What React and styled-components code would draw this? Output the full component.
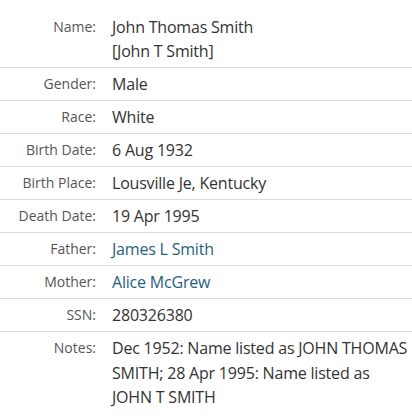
import React from "react";
import styled, { createGlobalStyle } from "styled-components";

const Global = createGlobalStyle`
  html, body { margin: 0; padding: 0; background: #fff; }
  body { font-family: "Open Sans", Lato, sans-serif; }
`;

const Table = styled.div`
  width: 412px;
  padding-top: 11px;
  box-sizing: border-box;
`;

const Row = styled.div`
  display: grid;
  grid-template-columns: 96px 1fr;
  column-gap: 16px;
  padding: 4px 0;
  border-bottom: ${(p) => (p.$last ? "none" : "1px solid #dcdcdc")};
`;

const Label = styled.div`
  text-align: right;
  font-size: 14px;
  line-height: 24px;
  color: #555;
`;

const Value = styled.div`
  font-size: 16px;
  letter-spacing: -0.2px;
  line-height: ${(p) => (p.$loose ? "24.5px" : "24px")};
  color: #333;
`;

const Link = styled.a`
  color: #1f5f80;
  text-decoration: none;
`;

const rows = [
  { label: "Name:", value: (<>John Thomas Smith<br />[John T Smith]</>) },
  { label: "Gender:", value: "Male" },
  { label: "Race:", value: "White" },
  { label: "Birth Date:", value: "6 Aug 1932" },
  { label: "Birth Place:", value: "Lousville Je, Kentucky" },
  { label: "Death Date:", value: "19 Apr 1995" },
  { label: "Father:", value: <Link href="#">James L Smith</Link> },
  { label: "Mother:", value: <Link href="#">Alice McGrew</Link> },
  { label: "SSN:", value: "280326380" },
  {
    label: "Notes:",
    loose: true,
    value:
      "Dec 1952: Name listed as JOHN THOMAS SMITH; 28 Apr 1995: Name listed as JOHN\u00a0T\u00a0SMITH",
  },
];

export default function App() {
  return (
    <>
      <Global />
      <Table>
        {rows.map((r, i) => (
          <Row key={r.label} $last={i === rows.length - 1}>
            <Label>{r.label}</Label>
            <Value $loose={r.loose}>{r.value}</Value>
          </Row>
        ))}
      </Table>
    </>
  );
}
